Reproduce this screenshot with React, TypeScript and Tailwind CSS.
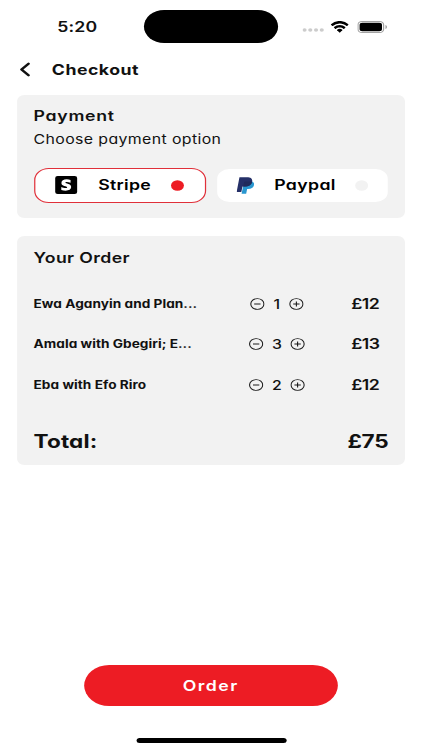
import React, { useState } from 'react';
import { ChevronLeft } from 'lucide-react';

type Method = 'stripe' | 'paypal';

interface OrderItem {
  id: number;
  name: string;
  quantity: number;
  price: number;
}

const initialItems: OrderItem[] = [
  { id: 1, name: 'Ewa Aganyin and Plan...', quantity: 1, price: 12 },
  { id: 2, name: 'Amala with Gbegiri; E...', quantity: 3, price: 13 },
  { id: 3, name: 'Eba with Efo Riro', quantity: 2, price: 12 },
];

function StatusBar() {
  return (
    <div className="flex h-[53px] shrink-0 items-center">
      <span className="ml-[47px] w-[71px] text-[14.5px] leading-5 font-semibold tracking-[0.1px]">5:20</span>
      <div className="h-[33px] w-[110px] rounded-full bg-black" />
      <svg className="mt-[7px] ml-[20px] h-[4px] w-[17.5px]" viewBox="0 0 17.5 4" fill="#cccccc">
        {[1.7, 6.4, 11.1, 15.8].map((cx) => (
          <circle key={cx} cx={cx} cy="2" r="1.7" />
        ))}
      </svg>
      <svg className="ml-[5.5px] h-[12px] w-[15px]" viewBox="0 0 17 12" fill="black" preserveAspectRatio="none">
        <path d="M8.5 2.4c2.4 0 4.7.9 6.4 2.6.1.1.3.1.5 0l1.2-1.3c.1-.1.1-.4 0-.5a11.7 11.7 0 0 0-16.2 0c-.1.1-.1.4 0 .5L1.6 5c.2.1.4.1.5 0A9.3 9.3 0 0 1 8.5 2.4z" />
        <path d="M8.5 6.5c1.3 0 2.6.5 3.6 1.4.1.1.3.1.5 0l1.2-1.3c.2-.1.2-.4 0-.5a7.8 7.8 0 0 0-10.6 0c-.2.1-.2.4 0 .5l1.2 1.3c.2.1.4.1.5 0 1-.9 2.3-1.4 3.6-1.4z" />
        <path d="M10.9 9.3c.1-.2.1-.4 0-.5a3.8 3.8 0 0 0-4.8 0c-.1.1-.1.3 0 .5l2.1 2.2c.2.2.4.2.6 0z" />
      </svg>
      <svg className="ml-[6.5px] h-[12px] w-[25px]" viewBox="0 0 25 12">
        <rect x="0.5" y="0.5" width="21" height="11" rx="3.3" fill="none" stroke="#a3a3a3" />
        <rect x="1.8" y="1.8" width="18.4" height="8.4" rx="2.2" fill="black" />
        <path d="M23 4v4c.8-.4 1.3-1.1 1.3-2S23.8 4.4 23 4z" fill="#a3a3a3" />
      </svg>
    </div>
  );
}

function StripeLogo() {
  return (
    <svg className="h-[18px] w-[18.5px]" viewBox="0 0 18 18">
      <rect width="18" height="18" rx="2" fill="black" />
      <path
        d="M8.3 6.6c0-.5.4-.7 1.1-.7 1 0 2.2.3 3.2.8V3.9a8.5 8.5 0 0 0-3.2-.6C6.8 3.3 5.1 4.7 5.1 6.9c0 3.5 4.7 2.9 4.7 4.4 0 .6-.5.8-1.2.8-1.1 0-2.5-.5-3.6-1.1v2.9c1.2.5 2.4.8 3.6.8 2.7 0 4.5-1.3 4.5-3.6 0-3.7-4.8-3.1-4.8-4.5z"
        fill="white"
      />
    </svg>
  );
}

function PaypalLogo() {
  return (
    <svg className="h-[17px] w-[14.5px]" viewBox="0 0 20 24" preserveAspectRatio="none">
      <path d="M17.6 6.3c1.9 1 2.5 2.9 2 5.4-.7 3.6-3.1 5.3-6.6 5.3h-1.1l-1.1 6.5H5.6L8.2 8z" fill="#2997d0" />
      <path d="M3.2.4h8.3c4.4 0 6.7 2.1 6.1 5.9-.8 4.8-3.9 7-8.5 7H6.7L5.3 21H0z" fill="#253068" />
      <path d="M8.4 7.8c.1-.8.7-1.3 1.5-1.3h5.3c.9 0 1.7.1 2.4.4-.9 4.3-3.9 6.4-8.5 6.4H7.5z" fill="#202b5b" />
    </svg>
  );
}

function RadioDot({ active }: { active: boolean }) {
  return (
    <svg className="h-[11px] w-[11px]" viewBox="0 0 11 11">
      <circle cx="5.5" cy="5.5" r="5.3" fill={active ? '#ed1c24' : '#f2f2f2'} />
    </svg>
  );
}

interface StepButtonProps {
  plus?: boolean;
  label: string;
  onClick: () => void;
}

function StepButton({ plus, label, onClick }: StepButtonProps) {
  return (
    <button onClick={onClick} aria-label={label}>
      <svg className="block h-[12px] w-[12px]" viewBox="0 0 12 12" fill="none" stroke="#1a1a1a" strokeWidth="0.9">
        <circle cx="6" cy="6" r="5.4" />
        <path d={plus ? 'M3.4 6h5.2M6 3.4v5.2' : 'M3.4 6h5.2'} />
      </svg>
    </button>
  );
}

export default function App() {
  const [method, setMethod] = useState<Method>('stripe');
  const [items, setItems] = useState(initialItems);

  const changeQuantity = (id: number, delta: number) => {
    setItems(items.map((item) => (item.id === id ? { ...item, quantity: Math.max(1, item.quantity + delta) } : item)));
  };

  const total = items.reduce((sum, item) => sum + item.quantity * item.price, 0);

  const optionClass = (value: Method) =>
    method === value ? 'border-[#e0303a]' : 'border-transparent';

  return (
    <div className="h-[750px] w-[422px] overflow-hidden bg-white">
      {/* the 346px phone layout is stretched sideways to fill the window */}
      <div className="flex h-full w-[346px] origin-left scale-x-[1.2197] flex-col bg-white font-['Inter','Liberation_Sans',sans-serif] text-[#111111] [font-feature-settings:'cv11']">
        <StatusBar />

        <header className="flex h-[41.5px] shrink-0 items-center pb-[8px]">
          <button aria-label="Back" className="ml-[9px]">
            <ChevronLeft className="h-[23px] w-[23px]" strokeWidth={2.4} />
          </button>
          <h1 className="ml-[10.5px] text-[14.5px] leading-5 font-bold tracking-[0.4px]">Checkout</h1>
        </header>

        <section className="mx-[14px] h-[123.5px] rounded-[6px] bg-[#f2f2f2] px-[13.5px] pt-[11px]">
          <h2 className="text-[14.5px] leading-5 font-semibold tracking-[0.6px]">Payment</h2>
          <p className="mt-[3.5px] text-[13px] leading-5 tracking-[0.32px]">Choose payment option</p>
          <div className="mt-[18.5px] flex items-center gap-[9.5px]">
            <button
              onClick={() => setMethod('stripe')}
              className={`flex h-[35px] w-[141px] items-center rounded-[12px] border bg-white pl-[16.5px] ${optionClass('stripe')}`}
            >
              <StripeLogo />
              <span className="ml-[17px] w-[59.3px] text-left text-[14.5px] leading-5 font-semibold tracking-[0.25px] text-black">Stripe</span>
              <RadioDot active={method === 'stripe'} />
            </button>
            <button
              onClick={() => setMethod('paypal')}
              className={`flex h-[33px] w-[139.5px] items-center rounded-[10px] border bg-white pl-[15px] ${optionClass('paypal')}`}
            >
              <PaypalLogo />
              <span className="ml-[16.3px] w-[66px] text-left text-[14.5px] leading-5 font-semibold tracking-[0.3px] text-black">Paypal</span>
              <RadioDot active={method === 'paypal'} />
            </button>
          </div>
        </section>

        <section className="mx-[14px] mt-[18px] h-[229px] rounded-[6px] bg-[#f2f2f2] px-[13.5px] pt-[11.5px]">
          <h2 className="text-[14.5px] leading-5 font-semibold tracking-[0.3px]">Your Order</h2>
          <div className="mt-[16px]">
            {items.map((item) => (
              <div key={item.id} className="grid h-[40.5px] grid-cols-[150px_99px_1fr] items-center">
                <span className="text-[11.2px] leading-5 font-bold tracking-[0.03px] whitespace-nowrap">{item.name}</span>
                <div className="flex items-center justify-center gap-[7px]">
                  <StepButton label="Remove one" onClick={() => changeQuantity(item.id, -1)} />
                  <span className="min-w-[6px] text-center text-[13px] leading-5 font-medium">{item.quantity}</span>
                  <StepButton plus label="Add one" onClick={() => changeQuantity(item.id, 1)} />
                </div>
                <span className="pl-[11.5px] text-[14.5px] leading-5 font-semibold tracking-[-0.5px]">£{item.price}</span>
              </div>
            ))}
          </div>
          <div className="mt-[24.5px] flex h-[24px] items-center justify-between text-[18.5px] font-bold">
            <span className="tracking-[0.1px]">Total:</span>
            <span className="tracking-[-0.2px]">£{total}</span>
          </div>
        </section>

        <button className="mt-auto mb-[32px] ml-[69px] h-[41px] w-[207.5px] rounded-full bg-[#ed1c24] text-[14.5px] font-semibold tracking-[1.2px] text-white">
          Order
        </button>
        <div className="mb-[7.5px] ml-[111.5px] h-[4.5px] w-[123px] shrink-0 rounded-full bg-black" />
      </div>
    </div>
  );
}
